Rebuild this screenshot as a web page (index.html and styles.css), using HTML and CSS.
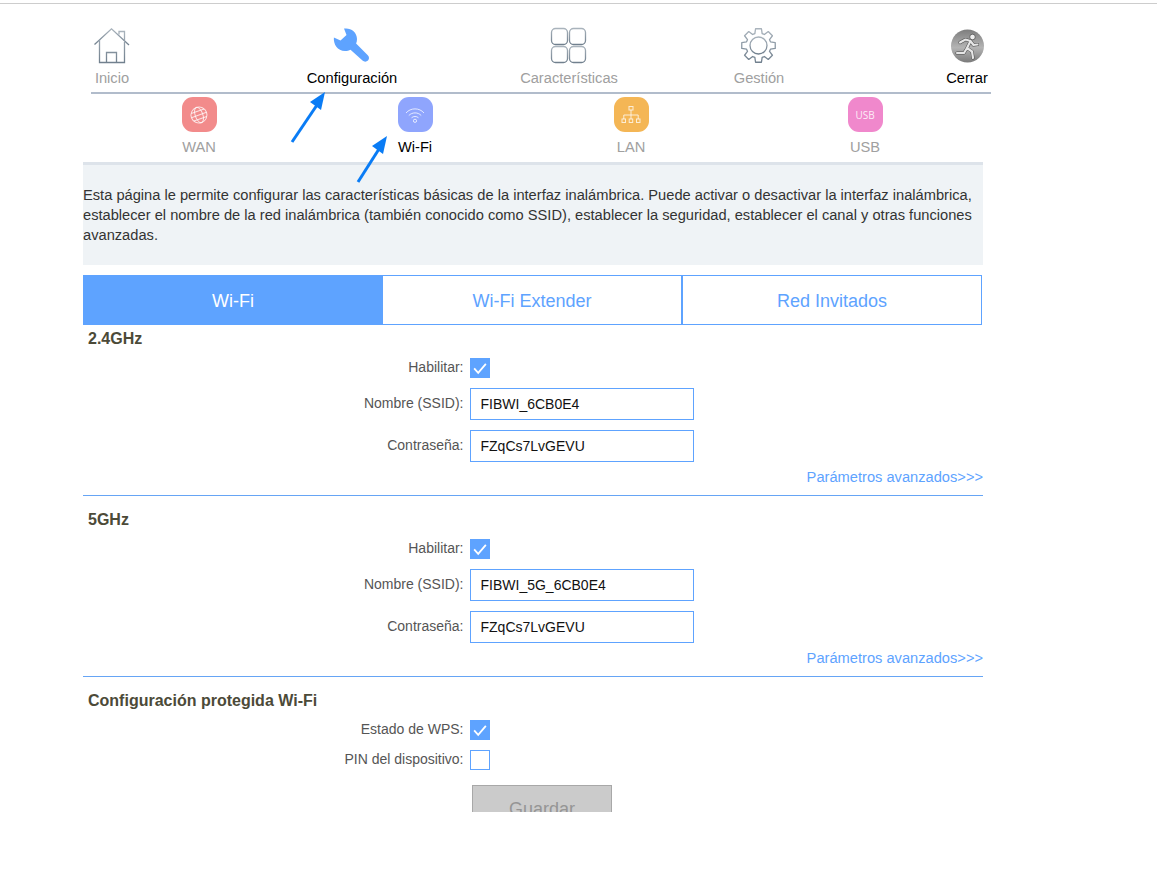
FILE: index.html
```html
<!DOCTYPE html>
<html lang="es">
<head>
<meta charset="utf-8">
<title>Wi-Fi</title>
<link rel="stylesheet" href="styles.css">
</head>
<body>
<svg class="defs" width="0" height="0" aria-hidden="true">
  <defs>
    <linearGradient id="line" x1="0" y1="0" x2="0" y2="1">
      <stop offset="0" stop-color="#a9b3bc"/>
      <stop offset="1" stop-color="#71808e"/>
    </linearGradient>
    <linearGradient id="ball" x1="0" y1="0" x2="0" y2="1">
      <stop offset="0" stop-color="#7d7d7d"/>
      <stop offset=".55" stop-color="#b4b4b4"/>
      <stop offset="1" stop-color="#7a7a7a"/>
    </linearGradient>
  </defs>
</svg>
<div class="shell">
  <nav class="nav">
    <a class="nav-item nav-item--home">
      <svg class="nav-icon" viewBox="0 0 35 35">
        <path class="stroke" d="M.5 16.500 17.500 .8 35 17"/>
        <path class="stroke" d="M25 6.500V3.500h5.500v9M5.500 12v22.500h25V14M12.500 34.500V24.500h10v10"/>
      </svg>
      <span>Inicio</span>
    </a>
    <a class="nav-item nav-item--active nav-item--config">
      <svg class="nav-icon" viewBox="0 0 35 35">
        <path fill="#5ea3ff" d="M10 .6C16-.6 23 3.500 23 11c0 1.800-.3 3.200-.9 4.500L33.800 27.200c1.600 1.600 1.600 3.900.2 5.300-1.500 1.500-4 1.500-5.500 0L16.500 21.800c-1.500.8-3.300 1.200-5.500 1.200C3.500 23-.8 16-.1 9.500L6.500 12.500 12.500 7Z"/>
      </svg>
      <span>Configuración</span>
    </a>
    <a class="nav-item nav-item--features">
      <svg class="nav-icon" viewBox="0 0 35 35">
        <rect class="stroke" x=".5" y=".5" width="16" height="16" rx="4"/>
        <rect class="stroke" x="18.500" y=".5" width="16" height="16" rx="4"/>
        <rect class="stroke" x=".5" y="18.500" width="16" height="16" rx="4"/>
        <rect class="stroke" x="18.500" y="18.500" width="16" height="16" rx="4"/>
      </svg>
      <span>Características</span>
    </a>
    <a class="nav-item nav-item--manage">
      <svg class="nav-icon" viewBox="-17.500 -17.500 35 35">
        <polygon class="stroke stroke--round" points="-3.650,-11.950 -2.950,-16.740 2.950,-16.740 3.650,-11.950 5.870,-11.030 9.750,-13.920 13.920,-9.750 11.030,-5.870 11.950,-3.650 16.740,-2.950 16.740,2.950 11.950,3.650 11.030,5.870 13.920,9.750 9.750,13.920 5.870,11.030 3.650,11.950 2.950,16.740 -2.950,16.740 -3.650,11.950 -5.870,11.030 -9.750,13.920 -13.920,9.750 -11.030,5.870 -11.950,3.650 -16.740,2.950 -16.740,-2.950 -11.950,-3.650 -11.030,-5.870 -13.920,-9.750 -9.750,-13.920 -5.870,-11.030"/>
        <circle class="stroke" r="8.500"/>
      </svg>
      <span>Gestión</span>
    </a>
    <a class="nav-item nav-item--active nav-item--exit">
      <svg class="nav-icon" viewBox="0 0 35 35">
        <circle cx="18.500" cy="18" r="16.500" fill="url(#ball)"/>
        <circle cx="23.500" cy="9" r="2.800" fill="#eee" stroke="#444" stroke-width=".7"/>
        <path class="runner-shade" d="M11 14.500l5.500-3 5 1.500-3.500 7 5 3.500 1 6.500M18 20l-3 5-7 0M21.500 13l3 4 4-.5"/>
        <path class="runner" d="M11 14.500l5.500-3 5 1.500-3.500 7 5 3.500 1 6.500M18 20l-3 5-7 0M21.500 13l3 4 4-.5"/>
      </svg>
      <span>Cerrar</span>
    </a>
  </nav>

  <div class="subnav">
    <a class="sub-item sub-item--wan">
      <span class="sub-icon sub-icon--wan">
        <svg viewBox="0 0 20 20" class="glyph">
          <g transform="rotate(-20 10 10)">
            <circle cx="10" cy="10" r="8"/>
            <ellipse cx="10" cy="10" rx="3.800" ry="8"/>
            <path d="M2 10h16M3.200 6h13.600M3.200 14h13.600"/>
          </g>
        </svg>
      </span>
      <span>WAN</span>
    </a>
    <a class="sub-item sub-item--active sub-item--wifi">
      <span class="sub-icon sub-icon--wifi">
        <svg viewBox="0 0 20 20" class="glyph">
          <path d="M1 8C5.500 2.500 14.500 2.500 19 8M3.800 10.500c3.500-3.500 9-3.500 12.400 0M6.500 12.800c2-1.800 5-1.800 7 0"/>
          <circle cx="10" cy="15.800" r="1.600"/>
        </svg>
      </span>
      <span>Wi-Fi</span>
    </a>
    <a class="sub-item sub-item--lan">
      <span class="sub-icon sub-icon--lan">
        <svg viewBox="0 0 20 20" class="glyph">
          <rect x="8" y="1.500" width="4" height="3.500"/>
          <rect x="1" y="14" width="3.500" height="3.500"/>
          <rect x="8.200" y="14" width="3.500" height="3.500"/>
          <rect x="15.500" y="14" width="3.500" height="3.500"/>
          <path d="M10 5v9M2.800 14v-4h14.400v4"/>
        </svg>
      </span>
      <span>LAN</span>
    </a>
    <a class="sub-item sub-item--usb">
      <span class="sub-icon sub-icon--usb"><span class="usb-text">USB</span></span>
      <span>USB</span>
    </a>
  </div>

  <p class="intro">Esta página le permite configurar las características básicas de la interfaz inalámbrica. Puede activar o desactivar la interfaz inalámbrica, establecer el nombre de la red inalámbrica (también conocido como SSID), establecer la seguridad, establecer el canal y otras funciones avanzadas.</p>

  <div class="tabs">
    <a class="tab tab--active">Wi-Fi</a>
    <a class="tab">Wi-Fi Extender</a>
    <a class="tab">Red Invitados</a>
  </div>

  <section class="band">
    <h2 class="band-title">2.4GHz</h2>
    <div class="row row--check">
      <span class="row-label">Habilitar:</span>
      <span class="check check--on"><svg viewBox="0 0 20 20"><path d="M3.500 10.500l4.500 5 8.500-10"/></svg></span>
    </div>
    <div class="row">
      <span class="row-label">Nombre (SSID):</span>
      <input class="field" type="text" value="FIBWI_6CB0E4">
    </div>
    <div class="row">
      <span class="row-label">Contraseña:</span>
      <input class="field" type="text" value="FZqCs7LvGEVU">
    </div>
    <a class="more">Parámetros avanzados&gt;&gt;&gt;</a>
  </section>

  <section class="band">
    <h2 class="band-title">5GHz</h2>
    <div class="row row--check">
      <span class="row-label">Habilitar:</span>
      <span class="check check--on"><svg viewBox="0 0 20 20"><path d="M3.500 10.500l4.500 5 8.500-10"/></svg></span>
    </div>
    <div class="row">
      <span class="row-label">Nombre (SSID):</span>
      <input class="field" type="text" value="FIBWI_5G_6CB0E4">
    </div>
    <div class="row">
      <span class="row-label">Contraseña:</span>
      <input class="field" type="text" value="FZqCs7LvGEVU">
    </div>
    <a class="more">Parámetros avanzados&gt;&gt;&gt;</a>
  </section>

  <section class="band band--last">
    <h2 class="band-title">Configuración protegida Wi-Fi</h2>
    <div class="row row--check">
      <span class="row-label">Estado de WPS:</span>
      <span class="check check--on"><svg viewBox="0 0 20 20"><path d="M3.500 10.500l4.500 5 8.500-10"/></svg></span>
    </div>
    <div class="row row--check">
      <span class="row-label">PIN del dispositivo:</span>
      <span class="check"></span>
    </div>
    <button class="save" type="button">Guardar</button>
  </section>
</div>

<svg class="arrows" viewBox="0 0 1157 874" aria-hidden="true">
  <path class="arrow-line" d="M292 141 317 104"/>
  <polygon class="arrow-head" points="325,91 321,109 310,101"/>
  <path class="arrow-line" d="M358 181 379 148"/>
  <polygon class="arrow-head" points="387,135 383,153 372,145"/>
</svg>
</body>
</html>
```

FILE: styles.css
```css
* { box-sizing: border-box; }

html, body { margin: 0; padding: 0; background: #fff; }

body {
  position: relative;
  height: 874px;
  overflow: hidden;
  border-top: 1px solid transparent;
  font-family: "Liberation Sans", Arial, sans-serif;
  font-size: 14px;
  line-height: 20px;
  color: #555;
}

body::before {
  content: "";
  display: block;
  height: 1px;
  margin-top: 2px;
  background: #cdcdcd;
}

.defs { position: absolute; }

.shell {
  width: 908px;
  height: 808px;
  margin-left: 83px;
  overflow: hidden;
}

/* top navigation */
.nav {
  display: flex;
  width: 900px;
  margin-left: 8px;
  padding: 24px 0 4px;
  border-bottom: 2px solid #b1bccb;
  font-size: 14.67px;
}

.nav-item {
  display: flex;
  flex-direction: column;
  align-items: center;
  flex: none;
  width: 100px;
  color: #a0a0a0;
}

.nav-item--active { color: #000; }
.nav-item--home { width: 42px; }
.nav-item--config { margin-left: 169px; }
.nav-item--features { margin-left: 117px; }
.nav-item--manage { margin-left: 90px; }
.nav-item--exit { width: 42px; margin-left: 137px; }

.nav-icon {
  display: block;
  width: 35px;
  height: 35px;
  margin-right: 1px;
  margin-bottom: 5px;
  overflow: visible;
}

.stroke {
  fill: none;
  stroke: url(#line);
  stroke-width: 1.3;
}

.stroke--round { stroke-linejoin: round; }

.runner, .runner-shade {
  fill: none;
  stroke-linecap: round;
  stroke-linejoin: round;
}

.runner { stroke: #e6e6e6; stroke-width: 2.200; }
.runner-shade { stroke: #4a4a4a; stroke-width: 3.200; }

/* secondary navigation */
.subnav {
  display: flex;
  width: 900px;
  padding: 3px 0 5px;
  font-size: 14.67px;
}

.sub-item {
  display: flex;
  flex-direction: column;
  align-items: center;
  flex: none;
  width: 100px;
  color: #a0a0a0;
}

.sub-item--active { color: #000; }
.sub-item--wan { margin-left: 66px; }
.sub-item--wifi { margin-left: 116px; }
.sub-item--lan { margin-left: 116px; }
.sub-item--usb { margin-left: 134px; }

.sub-icon {
  display: flex;
  align-items: center;
  justify-content: center;
  width: 35px;
  height: 35px;
  margin-bottom: 5px;
  border-radius: 11px;
}

.sub-icon--wan { background: #f28b8b; }
.sub-icon--wifi { background: #8fa5fd; }
.sub-icon--lan { background: #f4b655; }
.sub-icon--usb { background: #f088cc; }

.glyph {
  width: 20px;
  height: 20px;
  fill: none;
  stroke: #fff;
  stroke-opacity: .75;
  stroke-width: 1;
}

.usb-text {
  font-family: "Open Sans", "Liberation Sans", sans-serif;
  font-size: 10px;
  line-height: 12px;
  color: #fff;
  opacity: .85;
}

/* intro panel */
.intro {
  width: 900px;
  margin: 0;
  padding: 20px 0;
  border-top: 3px solid #dde3ea;
  background: #eff3f6;
  font-size: 14.67px;
  color: #333;
}

/* tabs */
.tabs {
  display: grid;
  grid-template-columns: 300px 299px 300px;
  width: 899px;
  margin-top: 10px;
}

.tab {
  display: flex;
  align-items: center;
  justify-content: center;
  height: 50px;
  padding-top: 2px;
  border: 1px solid #5ea3ff;
  font-size: 18px;
  color: #5ea3ff;
}

.tab--active {
  background: #5ea3ff;
  color: #fff;
}

.tab--active + .tab { border-left: 0; }

/* form sections */
.band {
  width: 900px;
  padding-bottom: 8px;
  border-bottom: 1px solid #66a5f5;
}

.band + .band { padding-top: 10px; }

.band--last { border-bottom: 0; }

.band-title {
  margin: 0;
  padding: 2px 0 0 5px;
  font-size: 16px;
  line-height: 24px;
  font-weight: bold;
  color: #4c4a38;
}

.row {
  display: grid;
  grid-template-columns: 381px auto;
  column-gap: 6px;
  align-items: center;
  justify-content: start;
  margin-top: 10px;
}

.row--check { min-height: 20px; }
.band-title + .row { margin-top: 7px; }

.row-label {
  margin-bottom: 2px;
  padding-right: .5px;
  line-height: 16px;
  text-align: right;
  color: #555;
}

.check {
  display: block;
  width: 20px;
  height: 20px;
  border: 1px solid #5ea3ff;
}

.check--on { background: #5ea3ff; }

.check svg {
  display: block;
  width: 18px;
  height: 18px;
  fill: none;
  stroke: #fff;
  stroke-width: 2;
}

.field {
  display: block;
  width: 224px;
  height: 32px;
  margin: 0;
  padding: 0 10px 0 9.5px;
  border: 1px solid #5ea3ff;
  border-radius: 0;
  outline: 0;
  background: #fff;
  font: 14px "Liberation Sans", Arial, sans-serif;
  color: #111;
}

.more {
  display: block;
  margin-top: 5px;
  font-size: 14.67px;
  text-align: right;
  color: #5ea3ff;
}

.save {
  display: block;
  width: 140px;
  height: 48px;
  margin: 15px 0 0 389px;
  padding: 0;
  border: 1px solid #a8a8a8;
  border-radius: 0;
  background: #cbcbcb;
  font: 18px "Liberation Sans", Arial, sans-serif;
  color: #959595;
}

/* annotations drawn over the page */
.arrows {
  position: absolute;
  top: 0;
  left: 0;
  width: 1157px;
  height: 874px;
  pointer-events: none;
}

.arrow-line {
  fill: none;
  stroke: #0a7cf5;
  stroke-width: 3;
}

.arrow-head { fill: #0a7cf5; }
```
